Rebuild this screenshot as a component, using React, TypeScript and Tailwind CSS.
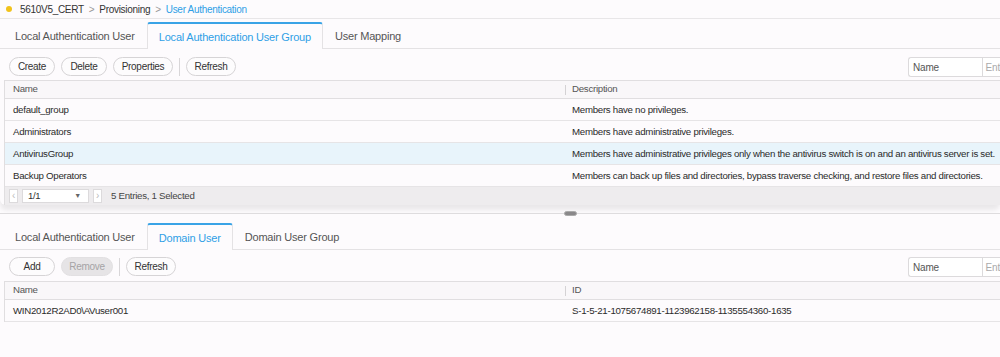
import React from "react";

const font = { fontFamily: '"Liberation Sans", Arial, sans-serif' };

function Tabs({ tabs, active }: { tabs: string[]; active: number }) {
  return (
    <div className="flex h-[30px] items-end border-b border-[#e4e2e4] pl-[3px]">
      {tabs.map((t, i) =>
        i === active ? (
          <div
            key={t}
            className="relative -mb-px flex h-[27px] items-center whitespace-nowrap rounded-t-[3px] border-x border-t-2 border-x-[#e4e2e4] border-t-[#39a3e6] bg-[#fdfbfd] px-[11px] pt-[2px] text-[11px] tracking-[-0.2px] text-[#2f9fe6]"
          >
            {t}
          </div>
        ) : (
          <div
            key={t}
            className="flex h-[25px] items-center whitespace-nowrap px-[12px] pt-[2px] text-[11px] tracking-[-0.2px] text-[#555]"
          >
            {t}
          </div>
        )
      )}
    </div>
  );
}

function Btn({ label, disabled, w }: { label: string; disabled?: boolean; w: string }) {
  return (
    <div
      className={`flex h-[19px] items-center justify-center rounded-full border text-[10px] tracking-[-0.3px] ${w} ${
        disabled
          ? "border-[#e2e0e2] bg-[#e6e4e6] text-[#a5a3a5]"
          : "border-[#d6d4d6] bg-[#fdfcfd] text-[#333]"
      }`}
    >
      {label}
    </div>
  );
}

function Toolbar({ children, h }: { children: React.ReactNode; h: string }) {
  return (
    <div className={`flex items-start justify-between pl-[9px] ${h}`}>
      <div className="flex items-center gap-[6px]">{children}</div>
      <div className="flex h-[20px] w-[92px] items-center rounded-l-[3px] border border-r-0 border-[#dcdadc] bg-white text-[10px] tracking-[-0.2px]">
        <div className="flex h-full w-[77px] items-center border-r border-[#dcdadc] pl-[4px] text-[#555]">Name</div>
        <div className="pl-[3px] text-[#aaa]">Ent</div>
      </div>
    </div>
  );
}

function Sep() {
  return <div className="h-[18px] w-px bg-[#d8d6d8]" />;
}

function Table({
  col2,
  rows,
  selected,
  footer,
}: {
  col2: string;
  rows: [string, string][];
  selected?: number;
  footer?: boolean;
}) {
  return (
    <div className="ml-[4px] w-[1010px] whitespace-nowrap border-l border-t border-[#e0dee0] text-[9.7px] tracking-[-0.28px]">
      <div className="flex h-[18px] items-center border-b border-[#e0dee0] bg-[#f9f7f9] text-[#555]">
        <div className="w-[560px] pl-[8px]">Name</div>
        <div className="flex h-[10px] items-center border-l border-[#d4d2d4] pl-[6px]">{col2}</div>
      </div>
      {rows.map((r, i) => (
        <div
          key={r[0]}
          className={`flex h-[22px] items-center border-b border-[#e6e4e6] pt-[2px] text-[#2a2a2a] ${
            i === selected ? "bg-[#e8f4fb]" : "bg-[#fdfbfd]"
          }`}
        >
          <div className="w-[560px] pl-[8px]">{r[0]}</div>
          <div className="pl-[7px]">{r[1]}</div>
        </div>
      ))}
      {footer && (
        <div className="flex h-[18px] items-center gap-[4px] bg-[#eeecee] pl-[4px] text-[#444]">
          <div className="flex h-[14px] w-[9px] items-center justify-center border border-[#dcdadc] bg-white text-[10px] leading-none text-[#bbb]">‹</div>
          <div className="flex h-[14px] w-[67px] items-center justify-between border border-[#dcdadc] bg-white pl-[5px] pr-[7px] text-[9.5px] text-[#333]">
            <span>1/1</span>
            <span className="text-[7px] text-[#666]">▼</span>
          </div>
          <div className="flex h-[14px] w-[9px] items-center justify-center border border-[#dcdadc] bg-white text-[10px] leading-none text-[#bbb]">›</div>
          <div className="ml-[5px]">5 Entries, 1 Selected</div>
        </div>
      )}
    </div>
  );
}

export default function App() {
  return (
    <div className="h-[357px] w-[1000px] overflow-hidden bg-[#fdfbfd]" style={font}>
      <div className="flex h-[19px] items-center border-b border-[#e8e6e8] pl-[6px] text-[10px] tracking-[-0.3px]">
        <div className="mr-[8px] h-[6px] w-[6px] rounded-full bg-[#f1c21b]" />
        <span className="text-[#333]">5610V5_CERT</span>
        <span className="mx-[5px] text-[#999]">&gt;</span>
        <span className="text-[#333]">Provisioning</span>
        <span className="mx-[5px] text-[#999]">&gt;</span>
        <span className="text-[#2f9fe6]">User Authentication</span>
      </div>

      <Tabs tabs={["Local Authentication User", "Local Authentication User Group", "User Mapping"]} active={1} />
      <Toolbar h="h-[31px] pt-[8px]">
        <Btn label="Create" w="w-[46px]" />
        <Btn label="Delete" w="w-[46px]" />
        <Btn label="Properties" w="w-[60px]" />
        <Sep />
        <Btn label="Refresh" w="w-[50px]" />
      </Toolbar>
      <div className="rounded-b-[6px] shadow-[0_5px_5px_rgba(0,0,0,0.08)]">
        <Table
          col2="Description"
          selected={2}
          footer
          rows={[
            ["default_group", "Members have no privileges."],
            ["Administrators", "Members have administrative privileges."],
            [
              "AntivirusGroup",
              "Members have administrative privileges only when the antivirus switch is on and an antivirus server is set.",
            ],
            [
              "Backup Operators",
              "Members can back up files and directories, bypass traverse checking, and restore files and directories.",
            ],
          ]}
        />
      </div>

      <div className="relative mt-[8px] h-px bg-[#dedcde]">
        <div className="absolute left-[564px] top-[-2px] h-[5px] w-[13px] rounded-full border border-[#aaa] bg-[#8a888a]" />
      </div>

      <div className="mt-[6px]">
        <Tabs tabs={["Local Authentication User", "Domain User", "Domain User Group"]} active={1} />
      </div>
      <Toolbar h="h-[31px] pt-[7px]">
        <Btn label="Add" w="w-[46px]" />
        <Btn label="Remove" disabled w="w-[52px]" />
        <Sep />
        <Btn label="Refresh" w="w-[50px]" />
      </Toolbar>
      <Table
        col2="ID"
        rows={[["WIN2012R2AD0\\AVuser001", "S-1-5-21-1075674891-1123962158-1135554360-1635"]]}
      />
    </div>
  );
}
